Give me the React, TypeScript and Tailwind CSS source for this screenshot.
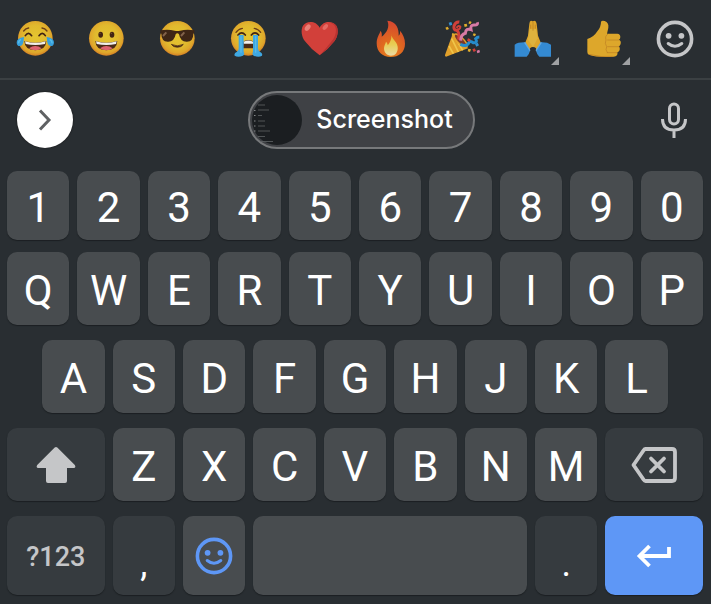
import type { ReactNode } from "react";
import clsx from "clsx";

const KEY = "flex items-center justify-center rounded-[10px] shadow-[0_1px_1px_#1b1f22]";
const LIGHT = "bg-[#484c4f] text-white";
const DARK = "bg-[#363b3f] text-[#c5c6c8]";

interface KeyProps {
	label: string;
	className?: string;
	children?: ReactNode;
}

const Key = ({ label, className, children }: KeyProps) => (
	<button type="button" aria-label={label} className={clsx(KEY, className)}>
		{children}
	</button>
);

const LetterKey = ({ char, className }: { char: string; className?: string }) => (
	<Key label={char} className={clsx("col-span-2 pt-1 text-[42px] leading-none", LIGHT, className)}>
		{char}
	</Key>
);

const Face = ({ children }: { children: ReactNode }) => (
	<>
		<defs>
			<radialGradient id="face" cx="0.5" cy="0.45" r="0.55">
				<stop offset="0" stopColor="#e4c530" />
				<stop offset="0.6" stopColor="#e1b92e" />
				<stop offset="0.85" stopColor="#dfa62b" />
				<stop offset="1" stopColor="#d47f24" />
			</radialGradient>
		</defs>
		<circle cx="58" cy="58" r="52" fill="url(#face)" />
		{children}
	</>
);

const Grin = () => (
	<>
		<path d="M25 66q33 10 66 0q-1 27-33 28q-32-1-33-28z" fill="#4a2a17" />
		<path d="M27 67q31 9 62 0l-2 8q-29 6-58 0z" fill="#f1efeb" />
		<path d="M39 88q19-14 38 0q-8 6-19 6t-19-6z" fill="#dd6370" />
	</>
);

const Joy = () => (
	<Face>
		<path d="M23 36q6-8 15-9M93 36q-6-8-15-9" stroke="#6d3e18" strokeWidth="4" fill="none" strokeLinecap="round" />
		<path d="M28 50q9-14 19 0M69 50q10-14 19 0" stroke="#422414" strokeWidth="5" fill="none" strokeLinecap="round" />
		<Grin />
		<path d="M24 54Q1 58 2 71q1 10 9 10q9 0 11-11zM92 54q23 4 22 17q-1 10-9 10q-9 0-11-11z" fill="#369fdc" />
		<path d="M15 61q-8 5-7 12M101 61q8 5 7 12" stroke="#57bce9" strokeWidth="4" fill="none" />
	</Face>
);

const Smile = () => (
	<Face>
		<ellipse cx="41" cy="47" rx="7" ry="9" fill="#422414" />
		<ellipse cx="75" cy="47" rx="7" ry="9" fill="#422414" />
		<circle cx="39" cy="43" r="2" fill="#82552c" />
		<circle cx="73" cy="43" r="2" fill="#82552c" />
		<Grin />
	</Face>
);

const Cool = () => (
	<Face>
		<path d="M7 34q23-4 43 1q8 2 16 0q20-5 43-1v8l-3 2q0 23-19 24q-20 1-24-22q-5-6-10 0q-4 23-24 22Q10 67 10 44l-3-2z" fill="#3e2616" />
		<path d="M15 51l10-11M69 51l10-11" stroke="#99765c" strokeWidth="6" opacity=".75" />
		<path d="M40 76q18 9 36 0q-5 9-18 9t-18-9z" fill="#4a2a17" stroke="#4a2a17" strokeWidth="2" strokeLinejoin="round" />
	</Face>
);

const Cry = () => (
	<Face>
		<path d="M21 40q7-10 19-12M95 40q-7-10-19-12" stroke="#6d3e18" strokeWidth="4" fill="none" strokeLinecap="round" />
		<path d="M27 48q11-13 22 0M67 48q11-13 22 0" stroke="#422414" strokeWidth="5" fill="none" strokeLinecap="round" />
		<path d="M42 71q3-8 16-8t16 8l2 17H40z" fill="#4a2a17" />
		<path d="M44 68q14-7 28 0v6H44z" fill="#f1efeb" />
		<path d="M29 48h15v50q4 7-2 12q-15 6-25 0q-3-8 7-12q5-2 5-10zM72 48h15v40q0 8 5 10q10 4 7 12q-10 6-25 0q-6-5-2-12z" fill="#3fa8e2" />
		<path d="M36 52v49M80 52v49" stroke="#5bbbe7" strokeWidth="4" />
	</Face>
);

const Heart = () => (
	<>
		<path d="M59 109Q34 92 15 67C4 52 2 32 9 20c9-15 39-17 50 6c11-23 41-21 50-6c7 12 5 32-6 47Q84 92 59 109z" fill="#d2403a" />
		<path d="M88 11c28 4 22 38 9 53Q82 84 59 109Q84 92 103 67c12-16 13-36 6-47q-7-10-21-9z" fill="#b93331" />
		<ellipse cx="23" cy="26" rx="7" ry="11" transform="rotate(38 23 26)" fill="#e98078" />
		<ellipse cx="76" cy="24" rx="6" ry="10" transform="rotate(42 76 24)" fill="#e56b64" />
	</>
);

const Fire = () => (
	<>
		<defs>
			<radialGradient id="flame" cx="0.5" cy="0.9" r="0.9">
				<stop offset="0" stopColor="#e8871f" />
				<stop offset="0.45" stopColor="#df6720" />
				<stop offset="1" stopColor="#d54531" />
			</radialGradient>
			<linearGradient id="core" x2="0" y2="1">
				<stop offset="0" stopColor="#e8b632" />
				<stop offset="0.5" stopColor="#e8cd55" />
				<stop offset="1" stopColor="#eadba6" />
			</linearGradient>
		</defs>
		<path d="M49 5c28 2 35 25 34 45c4-3 5-10 4-15c9 11 15 23 15 39c0 25-18 40-43 40S17 98 17 73c0-18 8-27 12-38c4 7 4 12 3 18c16-12 25-31 17-48z" fill="url(#flame)" />
		<path d="M60 43c0 16 18 24 20 40c2 17-8 27-20 27S39 101 39 88c0-9 5-13 6-20c4 4 5 8 5 11c10-10 13-24 10-36z" fill="url(#core)" />
	</>
);

const Party = () => (
	<>
		<path d="M32 44Q63 56 78 88L12 113q-4-1-3-5z" fill="#e1a02b" />
		<path d="M29 59l20 40M21 81l13 23M37 51l25 43" stroke="#f0c64a" strokeWidth="5" />
		<ellipse cx="56" cy="65" rx="9" ry="26" transform="rotate(-45 56 65)" fill="#7c382b" stroke="#e1a02b" strokeWidth="4" />
		<path d="M50 62Q54 37 43 34q-9-1-7-13Q41 7 52 9" stroke="#d2403a" strokeWidth="9" fill="none" />
		<path d="M41 33q14-1 14-10q-7-5-11 4" stroke="#d2403a" strokeWidth="6" fill="none" />
		<path d="M56 65q1-19 14-22q2-17 17-11q-3-15 10-14q12 1 9-8" stroke="#d77aa5" strokeWidth="9" fill="none" />
		<path d="M55 76q17 8 24-2q5-11 14-3q15 2 8-12q4-5 11-5" stroke="#258ccc" strokeWidth="9" fill="none" />
		<path d="M20 11l8-2 3 8-8 3zM99 75l8-4 4 8-8 4z" fill="#348fce" />
		<path d="M10 26l7-3 4 7-7 3zM66 16l8-2 2 8-8 2zM31 42l7 2-2 7-7-2zM95 43l7 2-3 7-7-3zM83 6l6 3-4 7-6-3z" fill="#e0ad2c" />
		<path d="M78 58l8 3-3 7-8-3zM91 91l7-3 4 7-7 4z" fill="#d2403a" />
		<path d="M104 95l8-3 2 8-8 3z" fill="#d77aa5" />
		<path d="M79 89l8 2-3 8-7-2z" fill="#e0ad2c" />
	</>
);

const Pray = () => (
	<>
		<path d="M59 7q-9-5-10 7l-4 36-12 30 16 20 10-15 12 15 16-20-12-30-4-36q-2-12-12-7z" fill="#dda52b" />
		<path d="M50 30h19l5 28-14 26-15-22z" fill="#deb23d" />
		<path d="M60 7v28M53 17v12M67 17v12" stroke="#b77922" strokeWidth="2" />
		<path d="M49 97q0-13 11-13t11 13v16H49z" fill="#292e32" />
		<path d="M5 77q11-8 32-7l14 25q-2 10-10 18H5zM114 77q-11-8-31-7L69 95q2 10 10 18h35z" fill="#348ad2" />
		<path d="M35 70l16 25M85 70L69 95" stroke="#61a8e5" strokeWidth="4" />
	</>
);

const Thumb = () => (
	<>
		<path d="M51 8q3-5 11-2q13 5 11 20l-4 18h31q9 1 9 10q0 6-4 8q7 3 5 12q-1 6-6 8q5 4 3 11q-2 6-7 7q3 12-11 13Q38 116 15 107q-5-2-5-8V60q19-5 30-23q11-13 11-29z" fill="#dda72b" />
		<path d="M71 63h33M71 83h34M70 101h29M71 46q-9 4-5 17q-5 10 2 20q-5 9 2 18" stroke="#bd7e22" strokeWidth="2" fill="none" strokeLinecap="round" />
		<path d="M14 106q39 10 72 6" stroke="#bc7b21" strokeWidth="2" fill="none" />
	</>
);

const SmileyOutline = () => (
	<svg viewBox="0 0 40 40" className="size-10" fill="none" stroke="currentColor" strokeWidth="3.600" strokeLinecap="round">
		<circle cx="20" cy="20" r="16.600" />
		<circle cx="13.600" cy="16.800" r="2.900" fill="currentColor" stroke="none" />
		<circle cx="26.400" cy="16.800" r="2.900" fill="currentColor" stroke="none" />
		<path d="M13.200 24.500q6.800 5.500 13.600 0" strokeWidth="3" />
	</svg>
);

const EMOJIS = [
	{ name: "Tears of joy", Art: Joy },
	{ name: "Grinning", Art: Smile },
	{ name: "Sunglasses", Art: Cool },
	{ name: "Crying", Art: Cry },
	{ name: "Heart", Art: Heart },
	{ name: "Fire", Art: Fire },
	{ name: "Party popper", Art: Party },
	{ name: "Folded hands", Art: Pray, variants: true },
	{ name: "Thumbs up", Art: Thumb, variants: true },
];

const EmojiBar = () => (
	<div className="grid h-20 grid-cols-10 border-b-2 border-[#3b4043]">
		{EMOJIS.map(({ name, Art, variants }) => (
			<button key={name} type="button" aria-label={name} className="flex items-center justify-center">
				<span className="relative">
					<svg viewBox="0 0 120 120" className="size-10">
						<Art />
					</svg>
					{variants && (
						<svg viewBox="0 0 8 8" className="absolute -right-1.5 -bottom-1.5 size-2 text-[#9fa1a3]">
							<path d="M8 0v8H0z" fill="currentColor" />
						</svg>
					)}
				</span>
			</button>
		))}
		<button type="button" aria-label="All emojis" className="flex items-center justify-center text-[#c5c6c8]">
			<SmileyOutline />
		</button>
	</div>
);

const SuggestionBar = () => (
	<div className="flex h-[79px] items-center justify-between pr-[13px] pl-[17px]">
		<button
			type="button"
			aria-label="Expand toolbar"
			className="flex size-14 items-center justify-center rounded-full bg-white text-[#5f6163] shadow-[0_0_2px_#111]"
		>
			<svg viewBox="0 0 24 24" className="size-6" fill="none" stroke="currentColor" strokeWidth="3">
				<path d="M7 2.500l9 9.500-9 9.500" />
			</svg>
		</button>
		<button
			type="button"
			className="flex h-[58px] items-center gap-3.5 rounded-full border-2 border-[#77797b] bg-[#3f4145] pr-5 pl-0.5 font-['Inter',sans-serif] text-[25px] font-medium text-white"
		>
			<svg viewBox="0 0 50 50" className="size-[50px]">
				<circle cx="25" cy="25" r="25" fill="#1b1e21" />
				<path
					d="M6 10h7M6 15h11M6 20.500h4M6 26h7M6 31h7M6 36h12M6 41.500h7M8 46.500h13"
					stroke="#606366"
					strokeWidth="0.800"
				/>
				<path d="M2 15.500h1.500M2 20.500h1.500M2 26h1.500M2 31h1.500M2 36h1.500" stroke="#85888a" strokeWidth="1.200" />
			</svg>
			Screenshot
		</button>
		<button type="button" aria-label="Voice typing" className="flex size-12 items-center justify-center text-[#c5c6c8]">
			<svg viewBox="0 0 30 36" className="h-9 w-[30px]" fill="none" stroke="currentColor" strokeWidth="3">
				<rect x="10.500" y="2" width="9" height="20" rx="4.500" />
				<path d="M3.500 17q0 11 11.500 11t11.500-11M15 28v8" />
			</svg>
		</button>
	</div>
);

const App = () => (
	<main className="bg-[#292e32] pb-[9px] font-['Roboto',sans-serif]">
		<EmojiBar />
		<SuggestionBar />
		<div className="pt-3 pr-2 pl-[7px]">
			<div className="mb-3 grid h-[69px] grid-cols-20 gap-2">
				{[..."1234567890"].map((char) => (
					<LetterKey key={char} char={char} />
				))}
			</div>
			<div className="grid auto-rows-[73px] grid-cols-20 gap-x-2 gap-y-[15px]">
				{[..."QWERTYUIOP"].map((char) => (
					<LetterKey key={char} char={char} />
				))}
				{[..."ASDFGHJKL"].map((char) => (
					<LetterKey key={char} char={char} className={char === "A" ? "col-start-2" : undefined} />
				))}
				<Key label="Shift" className={clsx("col-span-3 col-start-1", DARK)}>
					<svg viewBox="0 0 40 36" className="h-9 w-10" fill="currentColor">
						<path d="M18.700.6q1.300-1.200 2.600 0l17.500 17.500q1.600 3-1.300 3H31v13q0 1.900-2 1.900H12q-2 0-2-1.900v-13H2.500q-2.900 0-1.300-3z" />
					</svg>
				</Key>
				{[..."ZXCVBNM"].map((char) => (
					<LetterKey key={char} char={char} />
				))}
				<Key label="Backspace" className={clsx("col-span-3", DARK)}>
					<svg
						viewBox="0 0 46 38"
						className="h-[38px] w-[46px]"
						fill="none"
						stroke="currentColor"
						strokeWidth="3.800"
						strokeLinejoin="round"
						strokeLinecap="round"
					>
						<path d="M14.500 3H41q3 0 3 3v26q0 3-3 3H14.500q-1 0-2-1.500L2.500 19l10-14.500q1-1.500 2-1.500z" />
						<path d="M20 12.500l13 13M33 12.500l-13 13" />
					</svg>
				</Key>
			</div>
			<div className="mt-[15px] grid h-[79px] grid-cols-20 gap-2">
				<Key label="Symbols" className={clsx("col-span-3 pt-1 text-[27px] font-medium", DARK)}>
					?123
				</Key>
				<Key label="Comma" className="col-span-2 bg-[#363b3f] pt-4 text-[36px] leading-none text-white">
					,
				</Key>
				<Key label="Emoji" className="col-span-2 bg-[#484c4f] text-[#5e97f6]">
					<SmileyOutline />
				</Key>
				<Key label="Space" className={clsx("col-span-8", LIGHT)} />
				<Key label="Period" className="col-span-2 bg-[#363b3f] pt-4 text-[36px] leading-none text-white">
					.
				</Key>
				<Key label="Enter" className="col-span-3 bg-[#5e97f6] text-white">
					<svg viewBox="0 0 36 24" className="h-6 w-9" fill="none" stroke="currentColor" strokeWidth="3.800">
						<path d="M13.500 2L3.500 12l10 10M3.500 12H33V3" />
					</svg>
				</Key>
			</div>
		</div>
	</main>
);

export default App;
